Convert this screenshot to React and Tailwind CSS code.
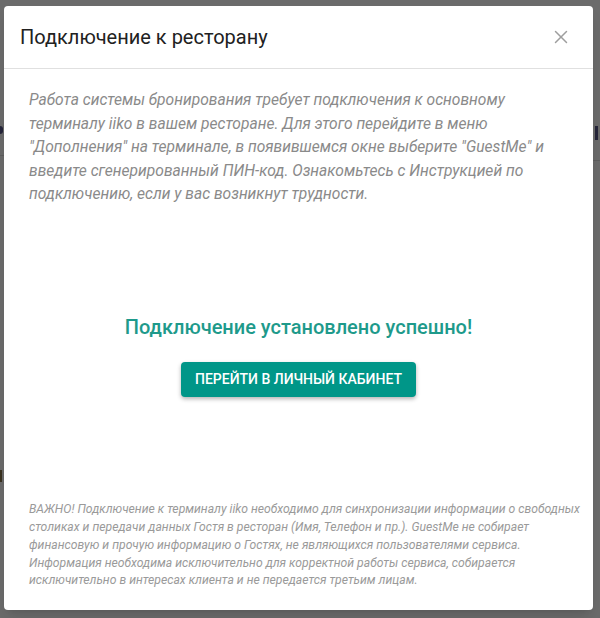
import { X } from 'lucide-react'

export default function App() {
  return (
    <div
      className="relative flex h-[618px] w-[600px] overflow-hidden bg-[#6b6b6b] pl-[4px] pt-[6px]"
      style={{ fontFamily: 'Roboto, "Noto Sans", sans-serif' }}
    >
      {/* page behind the overlay, peeking at the edges */}
      <div className="absolute left-0 top-[155px] h-[1px] w-[4px] bg-[#5e5e5e]" />
      <div className="absolute right-0 top-[160px] h-[1px] w-[7px] bg-[#5e5e5e]" />
      <div className="absolute left-0 top-[126px] h-[8px] w-[3px] rounded-r-full bg-[#25253a]" />
      <div className="absolute right-[2px] top-[126px] h-[14px] w-[3px] bg-[#25253a]" />
      <div className="absolute left-0 top-[470px] h-[12px] w-[2px] bg-[#3a3220]" />

      <div className="relative z-10 flex h-[604px] w-[589px] flex-col rounded-[4px] bg-white shadow-lg">
        <div className="flex h-[63px] items-center justify-between border-b border-[#e0e0e0] pl-[16px] pr-[21px]">
          <h1 className="text-[20px] font-normal text-[#212121]">Подключение к ресторану</h1>
          <X className="h-[22px] w-[22px] text-[#9e9e9e]" strokeWidth={1.6} />
        </div>

        <div className="flex flex-1 flex-col px-[25px] pt-[20px]">
          <p className="text-[15.6px] italic leading-[23.5px] text-[#8a8a8a]">
            Работа системы бронирования требует подключения к основному
            <br />
            терминалу iiko в вашем ресторане. Для этого перейдите в меню
            <br />
            "Дополнения" на терминале, в появившемся окне выберите "GuestMe" и
            <br />
            введите сгенерированный ПИН-код. Ознакомьтесь с Инструкцией по
            <br />
            подключению, если у вас возникнут трудности.
          </p>

          <div className="mt-[106px] flex flex-col items-center">
            <p className="text-[20px] font-medium leading-[28px] text-[#1e9a8b]">
              Подключение установлено успешно!
            </p>
            <button className="mt-[21px] h-[35px] rounded-[4px] bg-[#009688] px-[14px] text-[14px] font-medium uppercase text-white shadow-[0_2px_4px_rgba(0,0,0,0.3)]">
              Перейти в личный кабинет
            </button>
          </div>

          <p className="mt-auto mb-[20px] whitespace-nowrap text-[12.2px] italic leading-[17.75px] text-[#9a9a9a]">
            ВАЖНО! Подключение к терминалу iiko необходимо для синхронизации информации о свободных
            <br />
            столиках и передачи данных Гостя в ресторан (Имя, Телефон и пр.). GuestMe не собирает
            <br />
            финансовую и прочую информацию о Гостях, не являющихся пользователями сервиса.
            <br />
            Информация необходима исключительно для корректной работы сервиса, собирается
            <br />
            исключительно в интересах клиента и не передается третьим лицам.
          </p>
        </div>
      </div>
    </div>
  )
}
